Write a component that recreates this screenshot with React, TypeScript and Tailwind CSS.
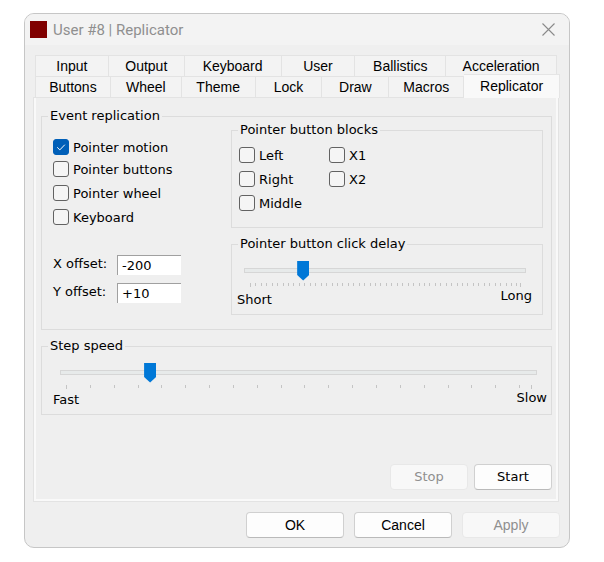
import { useId, useState } from 'react'
import type { ReactNode } from 'react'
import clsx from 'clsx'

const TABS_BACK = ['Input', 'Output', 'Keyboard', 'User', 'Ballistics', 'Acceleration']
const TABS_FRONT = ['Buttons', 'Wheel', 'Theme', 'Lock', 'Draw', 'Macros', 'Replicator']

function Tab({ label, active = false }: { label: string; active?: boolean }) {
  return (
    <button
      type="button"
      role="tab"
      aria-selected={active}
      className={clsx(
        'text-center',
        active
          ? '-mt-0.5 -mr-[3px] -mb-px border-t border-r border-[#e5e5e5] bg-[#f9f9f9] pb-0.5'
          : 'border-t border-r border-[#e3e3e3] bg-[#f3f3f3]',
      )}
    >
      {label}
    </button>
  )
}

function Group({
  title,
  className,
  children,
}: {
  title: string
  className?: string
  children: ReactNode
}) {
  return (
    <fieldset className={clsx('min-w-0 border border-[#dcdcdc]', className)}>
      <legend className="ml-1.5 px-0.5 leading-3">{title}</legend>
      {children}
    </fieldset>
  )
}

function Check({
  label,
  defaultChecked = false,
  className,
}: {
  label: string
  defaultChecked?: boolean
  className?: string
}) {
  return (
    <label className={clsx('flex items-center gap-1', className)}>
      <span className="relative flex size-4">
        <input
          type="checkbox"
          defaultChecked={defaultChecked}
          className="peer size-4 appearance-none rounded-[3px] border border-[#626262] bg-[#f5f5f5] checked:border-[#005fb8] checked:bg-[#005fb8]"
        />
        <svg
          viewBox="0 0 16 16"
          className="pointer-events-none absolute inset-0 hidden size-4 peer-checked:block"
          fill="none"
          stroke="#fff"
        >
          <path d="M4.2 8.3 6.8 10.9 11.8 5.7" />
        </svg>
      </span>
      <span className="pt-0.5">{label}</span>
    </label>
  )
}

function Offset({ label, value }: { label: string; value: string }) {
  const id = useId()
  return (
    <div className="flex h-5 items-center">
      <label htmlFor={id} className="w-16 pb-0.5">
        {label}
      </label>
      <input
        id={id}
        defaultValue={value}
        className="h-5 w-16 border-t border-l border-[#a0a0a0] bg-white px-1 outline-none"
      />
    </div>
  )
}

// Tick marks every `step` units, plus a taller one at both ends
function Ticks({ range, step }: { range: number; step: number }) {
  const marks: number[] = []
  for (let v = 0; v < range; v += step) marks.push(v)
  marks.push(range)

  return (
    <div className="px-1.5">
      <svg className="block h-1 w-full overflow-visible" shapeRendering="crispEdges">
        {marks.map((v) => (
          <rect
            key={v}
            x={`${(v / range) * 100}%`}
            width="1"
            height={v === 0 || v === range ? 4 : 3}
            fill="#c4c4c4"
          />
        ))}
      </svg>
    </div>
  )
}

function Slider({
  label,
  max,
  step,
  initial,
}: {
  label: string
  max: number
  step: number
  initial: number
}) {
  const [value, setValue] = useState(initial)
  return (
    <div className="flex flex-col gap-[3px]">
      <input
        type="range"
        aria-label={label}
        min={1}
        max={max}
        value={value}
        onChange={(e) => setValue(Number(e.target.value))}
        className="block h-5 w-full appearance-none bg-transparent [&::-webkit-slider-runnable-track]:h-[5px] [&::-webkit-slider-runnable-track]:border [&::-webkit-slider-runnable-track]:border-[#d6d6d6] [&::-webkit-slider-runnable-track]:bg-[#e7eaea] [&::-webkit-slider-thumb]:-mt-2 [&::-webkit-slider-thumb]:h-5 [&::-webkit-slider-thumb]:w-3 [&::-webkit-slider-thumb]:appearance-none [&::-webkit-slider-thumb]:bg-[#0078d7] [&::-webkit-slider-thumb]:[clip-path:polygon(0_0,100%_0,100%_72%,50%_100%,0_72%)]"
      />
      <Ticks range={max - 1} step={step} />
    </div>
  )
}

function PushButton({
  label,
  disabled = false,
  className,
}: {
  label: string
  disabled?: boolean
  className?: string
}) {
  return (
    <button
      type="button"
      disabled={disabled}
      className={clsx(
        'h-[26px] rounded border',
        disabled
          ? 'border-[#e8e8e8] bg-[#f8f8f8] text-[#8f8f8f]'
          : 'border-[#d0d0d0] border-b-[#bababa] bg-[#fdfdfd]',
        className,
      )}
    >
      {label}
    </button>
  )
}

export default function App() {
  return (
    <div className="bg-white pt-[13px] pr-[34px] pb-3.5 pl-6 font-['DejaVu_Sans',Verdana,sans-serif] text-[13px] leading-4 text-black">
      <div className="overflow-hidden rounded-[10px] border border-[#c6c6c6] bg-[#efefef]">
        <header className="flex h-[31px] items-center bg-[#f3f3f3] pr-3.5 pl-[5px] font-[Roboto,sans-serif]">
          <span className="size-[17px] bg-[#800000]" />
          <h1 className="ml-1.5 text-[15px] text-[#8f8f8f]">User #8 | Replicator</h1>
          <button type="button" aria-label="Close" className="ml-auto">
            <svg width="13" height="13" viewBox="0 0 13 13" stroke="#8a8a8a" strokeWidth="1.1">
              <path d="M.5.5l12 12M12.5.5l-12 12" />
            </svg>
          </button>
        </header>

        <main className="px-2 pt-2.5 pb-[9px]">
          <div
            role="tablist"
            className="mr-1 ml-0.5 font-['Liberation_Sans',Arial,sans-serif] text-sm leading-5"
          >
            <div className="grid h-[21px] grid-cols-[73fr_76fr_97fr_74fr_91fr_111fr] border-l border-[#e3e3e3]">
              {TABS_BACK.map((t) => (
                <Tab key={t} label={t} />
              ))}
            </div>
            <div className="grid h-[21px] grid-cols-[75fr_71fr_74fr_67fr_67fr_75fr_93fr] border-l border-[#e3e3e3]">
              {TABS_FRONT.map((t) => (
                <Tab key={t} label={t} active={t === 'Replicator'} />
              ))}
            </div>
          </div>

          <div className="mr-0.5 border border-[#e3e3e3]">
            <div
              role="tabpanel"
              className="border-x-2 border-b-2 border-[#f9f9f9] pt-3 pr-1 pb-[9px] pl-[5px]"
            >
              <Group title="Event replication">
                <div className="flex pr-2 pb-3.5">
                  <div className="w-[189px] shrink-0 pt-3.5 pl-[11px]">
                    <Check label="Pointer motion" defaultChecked className="h-[22px]" />
                    <Check label="Pointer buttons" className="h-[22px]" />
                    <Check label="Pointer wheel" className="mt-0.5 h-[22px]" />
                    <Check label="Keyboard" className="mt-0.5 h-[22px]" />
                    <div className="mt-[27px] flex flex-col gap-2">
                      <Offset label="X offset:" value="-200" />
                      <Offset label="Y offset:" value="+10" />
                    </div>
                  </div>

                  <div className="flex min-w-0 flex-1 flex-col gap-2.5 pt-0.5">
                    <Group title="Pointer button blocks">
                      <div className="grid grid-flow-col grid-cols-[90px_90px] grid-rows-3 px-[7px] pt-[7px] pb-3">
                        <Check label="Left" className="h-6" />
                        <Check label="Right" className="h-6" />
                        <Check label="Middle" className="h-6" />
                        <Check label="X1" className="h-6" />
                        <Check label="X2" className="h-6" />
                      </div>
                    </Group>
                    <Group title="Pointer button click delay">
                      <div className="px-3 pt-2.5">
                        <div className="pr-1">
                          <Slider label="Pointer button click delay" max={150} step={3} initial={30} />
                        </div>
                      </div>
                      <div className="flex justify-between pt-px pr-2.5 pb-1.5 pl-[5px]">
                        <span className="pt-1">Short</span>
                        <span>Long</span>
                      </div>
                    </Group>
                  </div>
                </div>
              </Group>

              <Group title="Step speed" className="mt-2.5">
                <div className="pt-2.5 pr-3.5 pl-[18px]">
                  <Slider label="Step speed" max={40} step={2} initial={8} />
                </div>
                <div className="flex justify-between pt-px pr-1 pb-1.5 pl-[11px]">
                  <span className="pt-0.5">Fast</span>
                  <span>Slow</span>
                </div>
              </Group>

              <div className="mt-[49px] flex justify-end gap-1.5">
                <PushButton label="Stop" disabled className="w-[78px]" />
                <PushButton label="Start" className="w-[78px]" />
              </div>
            </div>
          </div>

          <div className="mt-2.5 mr-px flex justify-end gap-2.5 font-['Liberation_Sans',Arial,sans-serif] text-sm">
            <PushButton label="OK" className="w-[98px]" />
            <PushButton label="Cancel" className="w-[98px]" />
            <PushButton label="Apply" disabled className="w-[98px]" />
          </div>
        </main>
      </div>
    </div>
  )
}
